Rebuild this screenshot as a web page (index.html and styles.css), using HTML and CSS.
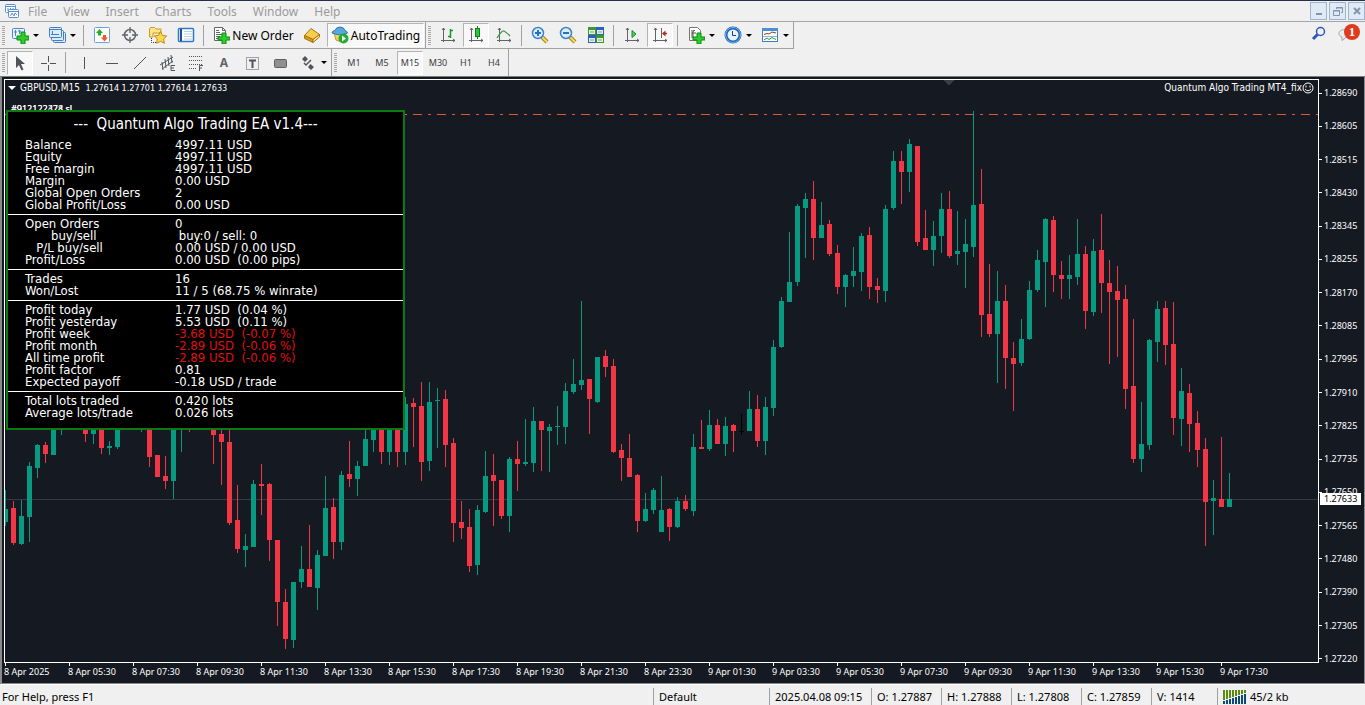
FILE: index.html
```
<!DOCTYPE html>
<html lang="en">
<head>
    <meta charset="UTF-8">
    <meta name="viewport" content="width=device-width, initial-scale=1.0">
    <title>GBPUSD,M15</title>
    <link rel="stylesheet" href="styles.css">
</head>
<body>
    <!-- Menu -->
    <header class="menubar">
        <svg class="app-icon" width="16" height="16" viewBox="0 0 16 16" fill="#fff" stroke="#5b8fd0"><rect x="1.500" y="1.500" width="10" height="8" rx="1"/><path d="M1.500 3.500h10M4 5v3M6.500 5v3M9 5v2"/><rect x="4.500" y="6.500" width="10" height="8" rx="1"/><path d="M4.500 8.500h10M6.500 13l1.500-3 2 3 1-3 2 2"/></svg>
        <nav class="menu">
            <a href="#">File</a>
            <a href="#">View</a>
            <a href="#">Insert</a>
            <a href="#">Charts</a>
            <a href="#">Tools</a>
            <a href="#">Window</a>
            <a href="#">Help</a>
        </nav>
        <div class="window-btns">
            <button aria-label="Minimize"><svg width="12" height="12" fill="none" stroke="#8294ad" stroke-width="2"><path d="M3 9h6"/></svg></button>
            <button aria-label="Restore"><svg width="12" height="12" fill="none" stroke="#8294ad"><path d="M4.500 4V2.500h6v5H9M4 3h7"/><path d="M1.500 5.500h6v5h-6zM1 6h7"/></svg></button>
            <button aria-label="Close"><svg width="12" height="12" fill="none" stroke="#8294ad" stroke-width="2"><path d="M3 3l6 6M9 3l-6 6"/></svg></button>
        </div>
    </header>

    <!-- Main toolbar -->
    <div class="toolbar">
        <div class="group">
            <span class="grip"></span>
            <button class="drop" aria-label="New chart"><svg width="18" height="18"><rect x="1.500" y="2.500" width="12" height="10" rx="1" fill="#eaf3fc" stroke="#4a86c8"/><path d="M4.500 4v6M3 6h3M8.500 4v4M7 5h3" stroke="#4a86c8"/><path d="M10 6h4v4h4v4h-4v4h-4v-4H6v-4h4z" fill="#2ecc2e" stroke="#0a8a0a"/></svg><i></i></button>
            <button class="drop" aria-label="Profiles"><svg width="18" height="18" fill="#dcebfa" stroke="#3f7fc4"><rect x="5.500" y="6.500" width="12" height="10" rx="1"/><rect x="3.500" y="4.500" width="12" height="10" rx="1"/><rect x="1.500" y="1.500" width="12" height="10" rx="1"/><path d="M1.500 3.500h12M4.500 5v4M3 8.500h8"/></svg><i></i></button>
            <span class="sep"></span>
            <button aria-label="Market Watch"><svg width="18" height="18"><rect x="1.500" y="1.500" width="15" height="15" rx="1" fill="#fff" stroke="#6ba0d8"/><path d="M6.500 3l3.500 4H8v2.500H5V7H3z" fill="#22b022"/><path d="M11.500 15.500l3.500-4h-2V9h-3v2.500H8z" fill="#f0592a"/></svg></button>
            <button aria-label="Data Window"><svg width="18" height="18" fill="none" stroke="#606468"><circle cx="9" cy="9" r="5.500" stroke-width="1.500"/><path d="M9 1v6M9 11v6M1 9h6M11 9h6" stroke-width="1.300"/></svg></button>
            <button aria-label="Navigator"><svg width="20" height="18"><path d="M1.500 11V3l1-1.500h4L8 3h5v4H5v4z" fill="#ffe48a" stroke="#c99a1c"/><path d="M3.500 12v4.500H8" fill="none" stroke="#333" stroke-dasharray="1 1"/><path d="M12.500 5.500l1.900 3.900 4.300.6-3.100 3 .8 4.300-3.900-2-3.900 2 .8-4.300-3.100-3 4.300-.6z" fill="#ffd84a" stroke="#c08a10"/></svg></button>
            <button aria-label="Terminal"><svg width="18" height="18"><rect x="1.500" y="2.500" width="15" height="13" rx="1" fill="#fff" stroke="#2f78c8" stroke-width="1.500"/><path d="M4 3v12" stroke="#1c4f96" stroke-width="2"/><path d="M7 5.500h8M7 8h8M7 10.500h8M7 13h8" stroke="#b9cfe8"/></svg></button>
            <span class="sep"></span>
            <button class="order"><svg width="18" height="18"><path d="M2.500 1.500h8l3 3v10h-11z" fill="#fff" stroke="#666"/><path d="M10.500 1.500v3h3" fill="none" stroke="#666"/><path d="M4 4.500h3M4 6.500h4M4 8.500h6M4 10.500h4M4 12.500h3" stroke="#666"/><path d="M10 7h4v4h4v3h-4v4h-4v-4H6v-3h4z" fill="#2ecc2e" stroke="#0a8a0a"/></svg>New Order</button>
            <button aria-label="MetaEditor"><svg width="18" height="18" stroke="#a8740c"><path d="M1.500 9.500L8 2.500l8.500 6-6.500 5z" fill="#f8cf4c"/><path d="M1.500 9.500v3l8.500 4v-3z" fill="#d89a20"/><path d="M10 13.500v3l6.500-5.500V8.500z" fill="#fbe7a0"/></svg></button>
            <button class="auto pressed"><svg width="18" height="18"><path d="M3 7h11l-1 7q-4 3-8 0z" fill="#f4d35a" stroke="#c79a20"/><path d="M1 7q0-2 3-2.500Q5 1 9 1t5 3.500Q16 5 16.500 7 9 10.500 1 7z" fill="#58a8dc" stroke="#2d78b4"/><circle cx="12.500" cy="12.500" r="5" fill="#22ac32"/><path d="M11 9.500v6l4-3z" fill="#fff"/></svg>AutoTrading</button>
        </div>
        <div class="group">
            <span class="grip"></span>
            <button aria-label="Bar Chart"><svg width="18" height="18" fill="none"><path d="M4.500 2v14M2 14.500h14M3 4l1.500-2L6 4M14 13l2 1.500-2 1.500" stroke="#606468"/><path d="M11.500 3v9M9 10.500h2.500M11.500 4.500H14" stroke="#159a25" stroke-width="1.500"/></svg></button>
            <button class="pressed" aria-label="Candlesticks"><svg width="18" height="18"><path d="M4.500 2v14M2 14.500h14M3 4l1.500-2L6 4M14 13l2 1.500-2 1.500" stroke="#606468" fill="none"/><path d="M10.500 0v13" stroke="#0d8020"/><rect x="8.500" y="2.500" width="4" height="8" fill="#27c83a" stroke="#0d8020"/></svg></button>
            <button aria-label="Line Chart"><svg width="18" height="18" fill="none"><path d="M4.500 2v14M2 14.500h14M3 4l1.500-2L6 4M14 13l2 1.500-2 1.500" stroke="#606468"/><path d="M2 12q5-8 7-7t6 5" stroke="#3b9a48" stroke-width="1.300"/></svg></button>
            <span class="sep"></span>
            <button aria-label="Zoom In"><svg width="18" height="18"><path d="M11 11l5 5" stroke="#a98310" stroke-width="4"/><path d="M11 11l5 5" stroke="#f5dc6a" stroke-width="2"/><circle cx="7" cy="7" r="5.500" fill="#d9edfb" stroke="#3c84cc" stroke-width="1.500"/><path d="M4 7h6M7 4v6" stroke="#2a6fc0" stroke-width="2"/></svg></button>
            <button aria-label="Zoom Out"><svg width="18" height="18"><path d="M11 11l5 5" stroke="#a98310" stroke-width="4"/><path d="M11 11l5 5" stroke="#f5dc6a" stroke-width="2"/><circle cx="7" cy="7" r="5.500" fill="#d9edfb" stroke="#3c84cc" stroke-width="1.500"/><path d="M4 7h6" stroke="#2a6fc0" stroke-width="2"/></svg></button>
            <button aria-label="Tile Windows"><svg width="18" height="18"><path d="M1 1h8v8H1zM9 9h8v8H9z" fill="#3c9a28"/><path d="M9 1h8v8H9zM1 9h8v8H1z" fill="#2c5fc0"/><path d="M2 4h6v4H2zM10 4h6v4h-6zM2 12h6v4H2zM10 12h6v4h-6z" fill="#e4f0e0"/><path d="M3 6h4M11 6h4M3 14h4M11 14h4" stroke="#7aa884"/></svg></button>
            <span class="sep"></span>
            <button aria-label="Auto Scroll"><svg width="18" height="18"><path d="M4.500 2v14M2 14.500h14M3 4l1.500-2L6 4M14 13l2 1.500-2 1.500" stroke="#606468" fill="none"/><path d="M9 4.500v7l4-3.500z" fill="#4fd45c" stroke="#168a26"/></svg></button>
            <button class="pressed" aria-label="Chart Shift"><svg width="18" height="18" fill="none"><path d="M4.500 2v14M2 14.500h14M3 4l1.500-2L6 4M14 13l2 1.500-2 1.500M10.500 2v10" stroke="#606468"/><path d="M16 7.500h-4" stroke="#b03020" stroke-width="1.500"/><path d="M14.500 4.500v6l-3.500-3z" fill="#b03020"/></svg></button>
            <span class="sep"></span>
            <button class="drop" aria-label="Templates"><svg width="18" height="18"><path d="M2.500 1.500h8l3 3v10h-11z" fill="#fff" stroke="#777"/><path d="M5 4v8M5 7h4M8 4.500q-2-1-2 2v5" stroke="#555" fill="none"/><path d="M10 7h4v4h4v3h-4v4h-4v-4H6v-3h4z" fill="#2ecc2e" stroke="#0a8a0a"/></svg><i></i></button>
            <button class="drop" aria-label="Periods"><svg width="18" height="18"><circle cx="9" cy="9" r="7" fill="#e8f2fb" stroke="#1f66b8" stroke-width="3"/><circle cx="9" cy="9" r="7.500" fill="none" stroke="#6db1ea"/><path d="M8.500 5v4.500H12" fill="none" stroke="#1f3f70"/></svg><i></i></button>
            <button class="drop" aria-label="Indicators"><svg width="18" height="18" fill="none"><rect x="1.500" y="2.500" width="15" height="13" fill="#fff" stroke="#3d7fc6"/><path d="M1 3.500h16" stroke="#4d8fd6" stroke-width="3"/><path d="M3 8.500l3-1 2 .5 3-2 4 1" stroke="#7a4a24"/><path d="M2 10.500h14" stroke="#9ab4d0"/><path d="M3 14l3-2 2 1.500 3-2 4 2" stroke="#2c9a3c"/></svg><i></i></button>
        </div>
        <div class="tools-right">
            <button aria-label="Search"><svg width="16" height="16" fill="none" stroke="#2f55c0"><circle cx="9.500" cy="5.500" r="4" stroke-width="1.500"/><path d="M6.500 8.500L2 13" stroke-width="3"/></svg></button>
            <button class="chat" aria-label="Notifications"><svg width="18" height="16" fill="#ececec" stroke="#a8a8a8"><path d="M8 3.500c9 0 9 8 1 8l-4 3v-3.500c-5-1.500-4-7.500 3-7.500z"/></svg><span class="badge">1</span></button>
        </div>
    </div>

    <!-- Line studies and timeframes -->
    <div class="toolbar">
        <div class="group">
            <span class="grip"></span>
            <button class="pressed" aria-label="Cursor"><svg width="18" height="18"><path d="M5 2v12l3-3 2.500 5.500 2-1L10 10h4z" fill="#50545a"/></svg></button>
            <button aria-label="Crosshair"><svg width="18" height="18" stroke="#50545a"><path d="M9.500 2v6M9.500 11v6M2 9.500h6M11 9.500h6"/></svg></button>
            <span class="sep"></span>
            <button aria-label="Vertical Line"><svg width="18" height="18" stroke="#50545a"><path d="M9.500 3v12"/></svg></button>
            <button aria-label="Horizontal Line"><svg width="18" height="18" stroke="#50545a"><path d="M3 9.500h12"/></svg></button>
            <button aria-label="Trendline"><svg width="18" height="18" stroke="#50545a"><path d="M3 15L15 3"/></svg></button>
            <button aria-label="Equidistant Channel"><svg width="18" height="18" stroke="#50545a" fill="none"><path d="M1 11L14 3M3 15L14 7M3 8l1 8M6 5l1 9M9 3l1 9M12 1l1 8M12 11.500v5M12 11.500h4M12 14h3M12 16.500h4"/></svg></button>
            <button aria-label="Fibonacci Retracement"><svg width="18" height="18" stroke="#50545a" fill="none"><path d="M2 2.500h14M2 6.500h14M2 10.500h14M2 14.500h8" stroke-dasharray="1 1"/><path d="M12.500 17v-5.500H16M12.500 14H15"/></svg></button>
            <button class="letter">A</button>
            <button aria-label="Text Label"><svg width="18" height="18" fill="none" stroke="#50545a"><rect x="3.500" y="3.500" width="12" height="12" stroke-dasharray="1 1"/><path d="M6 6.500h7M9.500 6v8" stroke-width="2"/></svg></button>
            <button aria-label="Rectangle"><svg width="18" height="18"><rect x="3.500" y="5.500" width="12" height="8" rx="1" fill="#909090" stroke="#606060"/></svg></button>
            <button class="drop" aria-label="Arrows"><svg width="18" height="18" fill="#50545a"><path d="M3 5l3-3 3 3-3 3zM9 13l2.500-3 3.500 3-3 3z"/><path d="M5 9l2 2 5-5" fill="none" stroke="#50545a" stroke-width="1.500"/></svg><i></i></button>
        </div>
        <div class="group">
            <span class="grip"></span>
            <button>M1</button>
            <button>M5</button>
            <button class="pressed">M15</button>
            <button>M30</button>
            <button>H1</button>
            <button>H4</button>
        </div>
    </div>

    <!-- Chart -->
    <main class="chart">
        <div class="plot">
            <svg class="candles" id="candles"></svg>
            <div class="chart-head">
                <span class="symbol"><i></i>GBPUSD,M15  <span class="quotes">1.27614 1.27701 1.27614 1.27633</span></span>
                <span class="expert">Quantum Algo Trading MT4_fix<svg width="12" height="12" fill="none" stroke="#fff"><circle cx="6" cy="6" r="5"/><path d="M4 3.500v2M8 3.500v2M3 7q3 3.500 6 0"/></svg></span>
            </div>
            <div class="order-label"><span>#912122324 sl</span><span>#912122478 sl</span></div>

            <section class="panel">
                <h1>---  Quantum Algo Trading EA v1.4---</h1>
                <dl>
                    <dt>Balance</dt><dd>4997.11 USD</dd>
                    <dt>Equity</dt><dd>4997.11 USD</dd>
                    <dt>Free margin</dt><dd>4997.11 USD</dd>
                    <dt>Margin</dt><dd>0.00 USD</dd>
                    <dt>Global Open Orders</dt><dd>2</dd>
                    <dt>Global Profit/Loss</dt><dd>0.00 USD</dd>
                </dl>
                <dl>
                    <dt>Open Orders</dt><dd>0</dd>
                    <dt>       buy/sell</dt><dd> buy:0 / sell: 0</dd>
                    <dt>   P/L buy/sell</dt><dd>0.00 USD / 0.00 USD</dd>
                    <dt>Profit/Loss</dt><dd>0.00 USD  (0.00 pips)</dd>
                </dl>
                <dl>
                    <dt>Trades</dt><dd>16</dd>
                    <dt>Won/Lost</dt><dd>11 / 5 (68.75 % winrate)</dd>
                </dl>
                <dl>
                    <dt>Profit today</dt><dd>1.77 USD  (0.04 %)</dd>
                    <dt>Profit yesterday</dt><dd>5.53 USD  (0.11 %)</dd>
                    <dt>Profit week</dt><dd class="loss">-3.68 USD  (-0.07 %)</dd>
                    <dt>Profit month</dt><dd class="loss">-2.89 USD  (-0.06 %)</dd>
                    <dt>All time profit</dt><dd class="loss">-2.89 USD  (-0.06 %)</dd>
                    <dt>Profit factor</dt><dd>0.81</dd>
                    <dt>Expected payoff</dt><dd>-0.18 USD / trade</dd>
                </dl>
                <dl>
                    <dt>Total lots traded</dt><dd>0.420 lots</dd>
                    <dt>Average lots/trade</dt><dd>0.026 lots</dd>
                </dl>
            </section>
        </div>

        <div class="price-axis">
            <span>1.28690</span>
            <span>1.28605</span>
            <span>1.28515</span>
            <span>1.28430</span>
            <span>1.28345</span>
            <span>1.28255</span>
            <span>1.28170</span>
            <span>1.28085</span>
            <span>1.27995</span>
            <span>1.27910</span>
            <span>1.27825</span>
            <span>1.27735</span>
            <span>1.27650</span>
            <span>1.27565</span>
            <span>1.27480</span>
            <span>1.27390</span>
            <span>1.27305</span>
            <span>1.27220</span>
            <b class="current">1.27633</b>
        </div>

        <div class="time-axis">
            <span>8 Apr 2025</span>
            <span>8 Apr 05:30</span>
            <span>8 Apr 07:30</span>
            <span>8 Apr 09:30</span>
            <span>8 Apr 11:30</span>
            <span>8 Apr 13:30</span>
            <span>8 Apr 15:30</span>
            <span>8 Apr 17:30</span>
            <span>8 Apr 19:30</span>
            <span>8 Apr 21:30</span>
            <span>8 Apr 23:30</span>
            <span>9 Apr 01:30</span>
            <span>9 Apr 03:30</span>
            <span>9 Apr 05:30</span>
            <span>9 Apr 07:30</span>
            <span>9 Apr 09:30</span>
            <span>9 Apr 11:30</span>
            <span>9 Apr 13:30</span>
            <span>9 Apr 15:30</span>
            <span>9 Apr 17:30</span>
        </div>
    </main>

    <footer class="statusbar">
        <span class="help">For Help, press F1</span>
        <span class="profile">Default</span>
        <span class="date">2025.04.08 09:15</span>
        <span>O: 1.27887</span>
        <span>H: 1.27888</span>
        <span>L: 1.27808</span>
        <span>C: 1.27859</span>
        <span class="volume">V: 1414</span>
        <span class="traffic"><svg width="25" height="14" fill="none"><path d="M1 0v10M4 0v9M7 0v8M10 0v7M13 0v6M16 0v5M19 0v4M22 0v3" stroke="#5c8a10" stroke-width="2"/><path d="M1 11v3M4 10v4M7 9v5M10 8v6M13 7v7M16 6v8M19 5v9M22 4v10" stroke="#0b4a78" stroke-width="2"/></svg>45/2 kb</span>
    </footer>

<script src="chart.js"></script>
</body>
</html>
```
FILE: styles.css
```
* {
    box-sizing: border-box;
}
body {
    margin: 0;
    height: 100vh;
    display: flex;
    flex-direction: column;
    overflow: hidden;
    background-color: #f0f0f0;
    color: #000;
    font-family: "Noto Sans", "Open Sans", sans-serif;
    font-size: 12px;
}
button {
    border: 0;
    padding: 0;
    background: none;
    color: inherit;
    font-family: inherit;
    font-size: inherit;
}
svg {
    flex: none;
}

/* Menu */
.menubar {
    display: flex;
    align-items: center;
    height: 22px;
    padding-left: 4px;
    border-top: 1px solid #26304c;
    border-bottom: 1px solid #a5a5a5;
}
.menu {
    display: flex;
    flex: 1;
    gap: 16px;
    margin-left: 8px;
}
.menu a {
    color: #9b9b9b;
    text-decoration: none;
}
.window-btns {
    display: flex;
    gap: 2px;
}
.window-btns button {
    display: flex;
    align-items: center;
    justify-content: center;
    width: 17px;
    height: 18px;
    border: 1px solid #9fb4cf;
    background-color: #dfeaf7;
}

/* Toolbars */
.toolbar {
    display: flex;
    height: 27px;
}
.group {
    display: flex;
    align-items: center;
    padding-left: 2px;
    border-right: 1px solid #a0a0a0;
    border-bottom: 1px solid #a0a0a0;
}
.grip {
    width: 3px;
    height: 19px;
    margin-right: 1px;
    background: repeating-linear-gradient(#a8a8a8 0 1px, #f0f0f0 1px 2px);
}
.group + .group .grip {
    margin-right: 3px;
}
.sep {
    width: 1px;
    height: 21px;
    margin: 0 4px 0 3px;
    background-color: #a0a0a0;
}
.group button {
    display: flex;
    align-items: center;
    justify-content: center;
    width: 28px;
    height: 24px;
}
.group .drop {
    width: 37px;
    justify-content: flex-start;
    gap: 4px;
    padding-left: 5px;
}
.drop i {
    border: 3px solid transparent;
    border-top-color: #000;
    border-bottom: 0;
}
.group .pressed {
    width: 26px;
    margin: 0 1px;
    border: 1px solid #b4b4b4;
    border-right-color: #fff;
    border-bottom-color: #fff;
    background-color: #f8f8f8;
}
.group .order {
    width: 90px;
    gap: 2px;
}
.group .auto {
    width: 97px;
    gap: 2px;
}
.toolbar + .toolbar {
    height: 28px;
    border-bottom: 1px solid #7c7c7c;
    color: #3c3c3c;
    font-size: 9px;
}
.toolbar + .toolbar .group {
    border-bottom: 0;
}
.group .letter {
    font-size: 12px;
    font-weight: bold;
    color: #606468;
}
.tools-right {
    display: flex;
    align-items: center;
    gap: 10px;
    margin-left: auto;
    padding-right: 10px;
}
.chat {
    position: relative;
}
.badge {
    position: absolute;
    top: -2px;
    left: 7px;
    width: 16px;
    border-radius: 8px;
    background-color: #e03a1e;
    color: #fff;
    font-family: "Liberation Serif", serif;
    font-size: 13px;
    font-weight: bold;
    line-height: 16px;
}

/* Chart */
.chart {
    flex: 1;
    min-height: 0;
    display: grid;
    grid-template-columns: 1fr 45px;
    grid-template-rows: 1fr 20px;
    padding: 2px 0 0 2px;
    border: solid #8a8a8a;
    border-width: 0 1px 1px 2px;
    background-color: #151922;
    color: #fff;
    font-size: 9px;
}
.plot {
    position: relative;
    border: 1px solid #fff;
    overflow: hidden;
}
.candles {
    position: absolute;
    inset: 0;
    width: 100%;
    height: 100%;
    shape-rendering: crispEdges;
}
.chart-head {
    position: relative;
    display: flex;
    justify-content: space-between;
    padding: 0 4px 0 3px;
    font-family: "DejaVu Sans Condensed", "Noto Sans", sans-serif;
    font-size: 10px;
    line-height: 16px;
}
.symbol,
.expert {
    display: flex;
    align-items: center;
    white-space: pre;
}
.symbol i {
    margin-right: 4px;
    border: 4px solid transparent;
    border-top-color: #fff;
    border-bottom: 0;
}
.quotes {
    font-size: 9px;
}
.order-label {
    position: absolute;
    top: 23px;
    left: 6px;
    display: grid;
    font-size: 9px;
    line-height: 12px;
}
.order-label span {
    grid-area: 1 / 1;
}
.panel {
    position: absolute;
    top: 30px;
    left: 1px;
    width: 399px;
    padding-bottom: 6px;
    border: 2px solid #0c7a10;
    background-color: #000;
    font-family: "DejaVu Sans Condensed", "Noto Sans", sans-serif;
    font-size: 13px;
    line-height: 12px;
}
.panel h1 {
    margin: 0;
    padding-right: 20px;
    font-size: 15px;
    font-weight: normal;
    line-height: 24px;
    text-align: center;
    white-space: pre;
}
.panel dl {
    display: grid;
    grid-template-columns: 150px 1fr;
    margin: 0;
    padding: 3px 0 3px 17px;
}
.panel dl + dl {
    border-top: 1px solid #fff;
}
.panel dt,
.panel dd {
    margin: 0;
    white-space: pre;
}
.panel .loss {
    color: #e01010;
}

/* Axes */
.price-axis {
    position: relative;
    display: flex;
    flex-direction: column;
    justify-content: space-between;
    padding-top: 8px;
    margin-bottom: -2px;
    line-height: 12px;
}
.price-axis span {
    display: flex;
    align-items: center;
    gap: 2px;
}
.price-axis span::before {
    content: "";
    width: 3px;
    height: 1px;
    background-color: #fff;
}
.current {
    position: absolute;
    top: 414px;
    left: 1px;
    width: 41px;
    padding-left: 4px;
    background-color: #fff;
    color: #000;
    font-weight: normal;
}
.time-axis {
    display: flex;
    grid-column: 1 / -1;
    overflow: hidden;
}
.time-axis span {
    flex: none;
    width: 64px;
    line-height: 12px;
}
.time-axis span::before {
    content: "";
    display: block;
    width: 1px;
    height: 3px;
    margin-left: 1px;
    background-color: #fff;
}

/* Status bar */
.statusbar {
    display: flex;
    align-items: center;
    height: 21px;
    padding-top: 3px;
    border-top: 1px solid #fff;
    font-size: 11px;
    line-height: 17px;
    white-space: nowrap;
}
.statusbar span {
    width: 70px;
    padding-left: 5px;
    border-left: 1px solid #a0a0a0;
}
.statusbar .help {
    flex: 1;
    padding-left: 2px;
    border-left: 0;
}
.statusbar .profile {
    width: 116px;
}
.statusbar .date {
    width: 102px;
}
.statusbar .volume {
    width: 66px;
}
.statusbar .traffic {
    display: flex;
    align-items: center;
    gap: 2px;
    width: 148px;
}
```
FILE: chart.js
```
const STEP = 8;
const UP = '#089981';
const DOWN = '#f23645';

// [slot, direction, high, bodyTop, bodyBottom, low]
const candles = [
    [0, 'u', 490, 509, 522, 526], [1, 'd', 501, 508, 543, 545], [2, 'u', 500, 516, 544, 545],
    [3, 'u', 462, 466, 517, 542], [4, 'u', 444, 445, 468, 478], [5, 'd', 442, 445, 454, 463],
    [6, 'u', 420, 420, 455, 455], [7, 'u', 420, 422, 428, 435], [10, 'd', 420, 425, 434, 442],
    [11, 'u', 420, 425, 434, 444], [12, 'd', 420, 425, 448, 454], [13, 'u', 441, 446, 448, 455],
    [14, 'u', 420, 425, 447, 449], [17, 'u', 420, 422, 427, 432], [18, 'd', 420, 425, 457, 467],
    [19, 'd', 455, 455, 477, 477], [20, 'd', 456, 476, 481, 489], [21, 'u', 420, 425, 481, 499],
    [22, 'u', 420, 422, 427, 452], [23, 'd', 420, 422, 427, 432], [26, 'd', 420, 425, 435, 464],
    [27, 'd', 425, 434, 442, 485], [28, 'd', 425, 442, 523, 525], [29, 'd', 485, 520, 549, 553],
    [30, 'u', 534, 546, 550, 567], [31, 'u', 480, 484, 547, 547], [32, 'd', 464, 484, 486, 515],
    [33, 'd', 483, 484, 540, 561], [34, 'd', 540, 540, 602, 626], [35, 'd', 589, 602, 639, 649],
    [36, 'u', 582, 582, 640, 648], [37, 'u', 546, 569, 582, 588], [38, 'd', 525, 569, 587, 587],
    [39, 'u', 550, 555, 588, 610], [40, 'u', 476, 508, 556, 556], [41, 'd', 498, 507, 542, 559],
    [42, 'u', 471, 475, 542, 550], [43, 'd', 441, 474, 479, 487], [44, 'u', 461, 466, 479, 496],
    [45, 'u', 420, 439, 466, 466], [46, 'u', 420, 425, 440, 452], [47, 'd', 420, 425, 452, 464],
    [48, 'u', 420, 425, 452, 465], [49, 'd', 420, 425, 452, 467], [50, 'u', 397, 404, 452, 465],
    [51, 'd', 398, 403, 407, 447], [52, 'd', 382, 406, 462, 481], [53, 'u', 382, 402, 461, 471],
    [54, 'u', 388, 400, 401, 448], [55, 'd', 390, 399, 445, 467], [56, 'd', 438, 443, 523, 542],
    [57, 'd', 501, 522, 528, 539], [58, 'd', 509, 527, 566, 572], [59, 'u', 505, 510, 565, 575],
    [60, 'u', 451, 476, 512, 513], [61, 'd', 454, 475, 481, 526], [62, 'd', 480, 480, 516, 519],
    [63, 'u', 457, 459, 516, 532], [64, 'd', 441, 459, 464, 491], [65, 'u', 419, 462, 464, 466],
    [66, 'u', 407, 421, 463, 472], [67, 'd', 421, 421, 430, 471], [68, 'u', 424, 427, 431, 472],
    [69, 'u', 406, 426, 427, 445], [70, 'u', 383, 391, 427, 444], [71, 'u', 359, 384, 392, 394],
    [72, 'u', 301, 380, 385, 390], [73, 'd', 379, 379, 399, 434], [74, 'u', 357, 357, 402, 403],
    [75, 'd', 350, 356, 367, 377], [76, 'd', 359, 366, 452, 453], [77, 'd', 444, 450, 458, 481],
    [78, 'd', 434, 458, 477, 477], [79, 'd', 474, 475, 521, 532], [80, 'u', 493, 509, 521, 522],
    [81, 'u', 488, 490, 510, 514], [82, 'u', 476, 510, 532, 532], [83, 'd', 508, 509, 527, 541],
    [84, 'u', 497, 501, 527, 528], [85, 'd', 495, 501, 509, 511], [86, 'u', 434, 447, 511, 516],
    [87, 'd', 420, 447, 449, 449], [88, 'u', 410, 425, 449, 451], [89, 'd', 419, 425, 444, 444],
    [90, 'u', 417, 426, 444, 456], [91, 'd', 424, 425, 431, 452], [92, 'n', 414, 431, 432, 435],
    [93, 'u', 391, 409, 431, 431], [94, 'd', 395, 409, 441, 447], [95, 'u', 397, 407, 441, 455],
    [96, 'u', 340, 347, 408, 416], [97, 'u', 297, 301, 347, 348], [98, 'u', 232, 282, 302, 302],
    [99, 'u', 204, 206, 282, 286], [100, 'u', 193, 199, 208, 258], [101, 'd', 181, 199, 238, 260],
    [102, 'u', 202, 225, 238, 238], [103, 'd', 220, 224, 254, 256], [104, 'd', 245, 253, 287, 294],
    [105, 'u', 274, 275, 287, 307], [106, 'u', 247, 271, 276, 287], [107, 'u', 233, 236, 272, 291],
    [108, 'd', 227, 235, 287, 299], [109, 'd', 278, 286, 290, 303], [110, 'u', 205, 209, 291, 302],
    [111, 'u', 151, 161, 208, 210], [112, 'd', 151, 161, 172, 204], [113, 'u', 139, 144, 172, 192],
    [114, 'd', 146, 146, 242, 246], [115, 'd', 210, 238, 250, 250], [116, 'u', 221, 236, 250, 266],
    [117, 'u', 193, 209, 236, 253], [118, 'd', 191, 209, 256, 258], [119, 'u', 211, 251, 254, 265],
    [120, 'u', 219, 244, 252, 288], [121, 'u', 111, 205, 247, 257], [122, 'd', 169, 204, 315, 337],
    [123, 'd', 264, 314, 334, 337], [124, 'u', 271, 301, 334, 383], [125, 'd', 285, 301, 358, 389],
    [126, 'd', 342, 358, 364, 411], [127, 'u', 319, 339, 363, 366], [128, 'u', 281, 290, 339, 340],
    [129, 'u', 250, 260, 290, 292], [130, 'u', 218, 219, 262, 307], [131, 'd', 216, 220, 275, 292],
    [132, 'd', 261, 275, 279, 299], [133, 'u', 255, 275, 279, 299], [134, 'u', 219, 254, 277, 285],
    [135, 'd', 246, 254, 311, 329], [136, 'u', 239, 251, 312, 316], [137, 'd', 214, 250, 283, 313],
    [138, 'd', 260, 283, 292, 364], [139, 'd', 266, 291, 300, 357], [140, 'd', 285, 299, 389, 409],
    [141, 'd', 319, 386, 459, 463], [142, 'u', 402, 444, 459, 472], [143, 'u', 339, 340, 445, 450],
    [144, 'u', 301, 309, 342, 362], [145, 'd', 301, 308, 345, 365], [146, 'd', 302, 344, 418, 435],
    [147, 'u', 368, 391, 419, 446], [148, 'd', 384, 393, 424, 452], [149, 'd', 411, 423, 450, 467],
    [150, 'd', 438, 449, 502, 546], [151, 'u', 480, 498, 501, 535], [152, 'd', 437, 499, 507, 507],
    [153, 'u', 473, 499, 507, 507]
];

function rect(x, y, width, height, fill) {
    return `<rect x="${x}" y="${y}" width="${width}" height="${height}" fill="${fill}"/>`;
}

function drawChart() {
    const colors = { u: UP, d: DOWN, n: '#000' };
    let out = '<path d="M938 0h12l-6 5z" fill="#3a3d47"/>';

    // current price and stop loss levels
    out += '<path d="M0 419.5H4000" stroke="#363a45"/>';
    out += '<path d="M0 34.5H4000" stroke="#e0582c" stroke-dasharray="9 6 3 6"/>';

    candles.forEach(([slot, dir, high, top, bottom, low]) => {
        const x = slot * STEP;
        out += rect(x, high - 80, 1, low - high, colors[dir]);
        out += rect(x - 2, top - 80, 5, bottom - top, colors[dir]);
    });
    document.getElementById('candles').innerHTML = out;
}

drawChart();
```
